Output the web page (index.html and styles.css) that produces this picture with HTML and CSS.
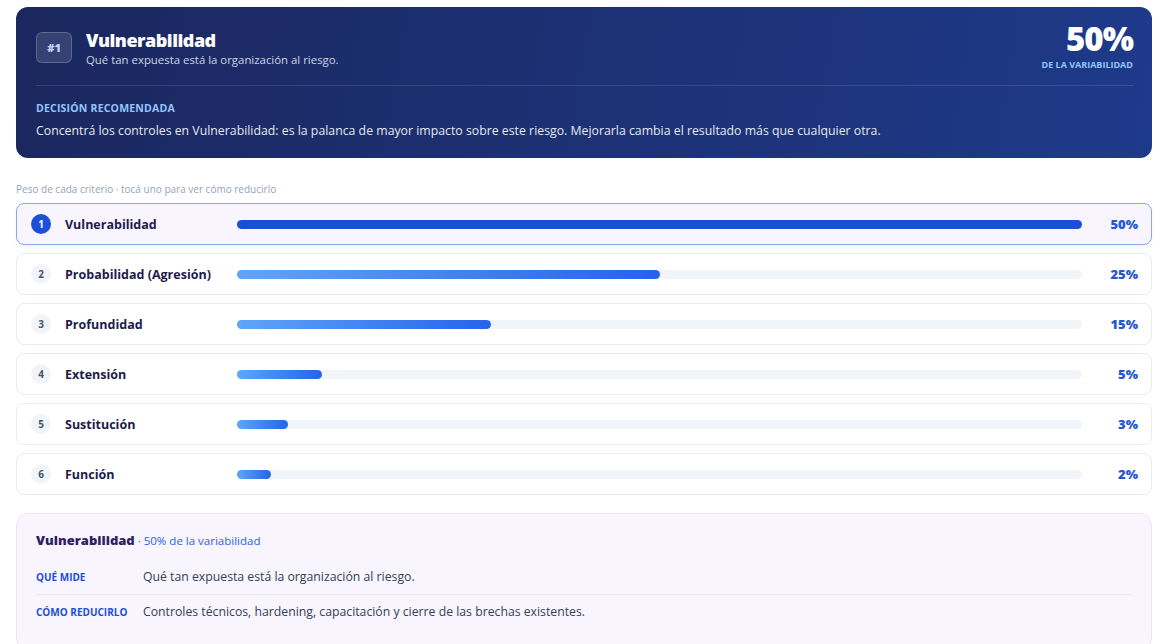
FILE: index.html
```html
<!DOCTYPE html>
<html lang="es">
<head>
    <meta charset="UTF-8">
    <meta name="viewport" content="width=device-width, initial-scale=1.0">
    <title>Criterios de riesgo</title>
    <link rel="stylesheet" href="styles.css">
</head>
<body>
    <div class="page">
        <!-- Criterio principal -->
        <section class="hero">
            <div class="hero-head">
                <div class="rank">#1</div>
                <div class="hero-title">
                    <h1>Vulnerabilidad</h1>
                    <p>Qué tan expuesta está la organización al riesgo.</p>
                </div>
                <div class="hero-share">
                    <div class="hero-pct">50%</div>
                    <div class="hero-pct-label">DE LA VARIABILIDAD</div>
                </div>
            </div>
            <div class="hero-decision">
                <div class="decision-label">DECISIÓN RECOMENDADA</div>
                <p>Concentrá los controles en Vulnerabilidad: es la palanca de mayor impacto sobre este riesgo. Mejorarla cambia el resultado más que cualquier otra.</p>
            </div>
        </section>

        <div class="hint">Peso de cada criterio · tocá uno para ver cómo reducirlo</div>

        <!-- Lista de criterios -->
        <div class="criteria">
            <div class="criterion active">
                <span class="num">1</span>
                <span class="name">Vulnerabilidad</span>
                <div class="track"><div class="fill" style="width: 100%"></div></div>
                <span class="pct">50%</span>
            </div>
            <div class="criterion">
                <span class="num">2</span>
                <span class="name">Probabilidad (Agresión)</span>
                <div class="track"><div class="fill" style="width: 50%"></div></div>
                <span class="pct">25%</span>
            </div>
            <div class="criterion">
                <span class="num">3</span>
                <span class="name">Profundidad</span>
                <div class="track"><div class="fill" style="width: 30%"></div></div>
                <span class="pct">15%</span>
            </div>
            <div class="criterion">
                <span class="num">4</span>
                <span class="name">Extensión</span>
                <div class="track"><div class="fill" style="width: 10%"></div></div>
                <span class="pct">5%</span>
            </div>
            <div class="criterion">
                <span class="num">5</span>
                <span class="name">Sustitución</span>
                <div class="track"><div class="fill" style="width: 6%"></div></div>
                <span class="pct">3%</span>
            </div>
            <div class="criterion">
                <span class="num">6</span>
                <span class="name">Función</span>
                <div class="track"><div class="fill" style="width: 4%"></div></div>
                <span class="pct">2%</span>
            </div>
        </div>

        <!-- Detalle del criterio seleccionado -->
        <section class="detail">
            <div class="detail-title"><strong>Vulnerabilidad</strong> · 50% de la variabilidad</div>
            <div class="detail-row">
                <span class="detail-key">QUÉ MIDE</span>
                <span class="detail-value">Qué tan expuesta está la organización al riesgo.</span>
            </div>
            <div class="detail-row">
                <span class="detail-key">CÓMO REDUCIRLO</span>
                <span class="detail-value">Controles técnicos, hardening, capacitación y cierre de las brechas existentes.</span>
            </div>
        </section>
    </div>
</body>
</html>
```

FILE: styles.css
```css
/* General */
body {
    margin: 0;
    font-family: 'Open Sans', 'Noto Sans', sans-serif;
    background-color: #ffffff;
    color: #1e293b;
}

.page {
    padding: 7px 19px 0 16px;
}

/* Hero card */
.hero {
    background: linear-gradient(100deg, #1b275e 0%, #1e3a8a 100%);
    border-radius: 12px;
    padding: 17px 19px 19px 20px;
    color: white;
}

.hero-head {
    display: flex;
    align-items: center;
    gap: 14px;
    padding-bottom: 14px;
    border-bottom: 1px solid rgba(255, 255, 255, 0.12);
}

.rank {
    width: 34px;
    height: 29px;
    display: flex;
    align-items: center;
    justify-content: center;
    background-color: rgba(255, 255, 255, 0.12);
    border: 1px solid rgba(255, 255, 255, 0.2);
    border-radius: 6px;
    font-size: 11px;
    font-weight: 800;
    color: #c7d2fe;
}

.hero-title {
    flex: 1;
}

.hero-title h1 {
    margin: 0;
    font-size: 18px;
    font-weight: 800;
    line-height: 22px;
    letter-spacing: -0.5px;
}

.hero-title p {
    margin: 1px 0 0;
    font-size: 11.4px;
    color: #cbd5e1;
}

.hero-share {
    text-align: right;
}

.hero-pct {
    font-size: 33px;
    font-weight: 800;
    line-height: 30px;
    letter-spacing: -1px;
}

.hero-pct-label {
    font-size: 9px;
    font-weight: 700;
    line-height: 12px;
    color: #93c5fd;
    margin-top: 5px;
}

.hero-decision {
    padding-top: 15px;
}

.decision-label {
    font-size: 10.5px;
    font-weight: 700;
    color: #93c5fd;
    letter-spacing: 0.2px;
}

.hero-decision p {
    margin: 7px 0 0;
    font-size: 12.3px;
    color: #e2e8f0;
}

/* Hint */
.hint {
    margin: 24px 0 7px;
    font-size: 10px;
    color: #94a3b8;
}

/* Criteria rows */
.criteria {
    display: flex;
    flex-direction: column;
    gap: 8px;
}

.criterion {
    display: flex;
    align-items: center;
    gap: 14px;
    height: 40px;
    padding: 0 13px 0 14px;
    border: 1px solid #e8ebf2;
    border-radius: 8px;
    background-color: white;
    cursor: pointer;
}

.criterion.active {
    background-color: #f8f5fe;
    border-color: #8ea6e6;
    box-shadow: 0 2px 4px rgba(37, 99, 235, 0.08);
}

.num {
    width: 20px;
    height: 20px;
    border-radius: 50%;
    display: flex;
    align-items: center;
    justify-content: center;
    background-color: #f1f5f9;
    color: #475569;
    font-size: 10px;
    font-weight: 700;
}

.criterion.active .num {
    background-color: #1d4ed8;
    color: white;
}

.name {
    flex: 0 0 158px;
    font-size: 12.5px;
    font-weight: 700;
    color: #1e1b4b;
}

.track {
    flex: 1;
    height: 9px;
    border-radius: 5px;
    background-color: #f1f4f8;
}

.fill {
    height: 100%;
    border-radius: 5px;
    background: linear-gradient(90deg, #60a5fa, #2563eb);
}

.criterion.active .fill {
    background: #1d4ed8;
}

.pct {
    flex: 0 0 42px;
    text-align: right;
    font-size: 13px;
    font-weight: 800;
    color: #2456d6;
}

/* Detail panel */
.detail {
    margin-top: 18px;
    background-color: #f8f5fe;
    border: 1px solid #ebe6f5;
    border-radius: 12px;
    padding: 17px 19px 20px 19px;
}

.detail-title {
    font-size: 11.5px;
    color: #2563eb;
    margin-bottom: 11px;
}

.detail-title strong {
    font-size: 13px;
    font-weight: 800;
    color: #2e1f5e;
}

.detail-row {
    display: flex;
    align-items: center;
    padding: 8px 0 9px;
}

.detail-row + .detail-row {
    border-top: 1px solid #ece8f6;
}

.detail-key {
    flex: 0 0 107px;
    font-size: 10px;
    font-weight: 700;
    color: #1d4ed8;
}

.detail-value {
    font-size: 12.25px;
    color: #334155;
}
```
